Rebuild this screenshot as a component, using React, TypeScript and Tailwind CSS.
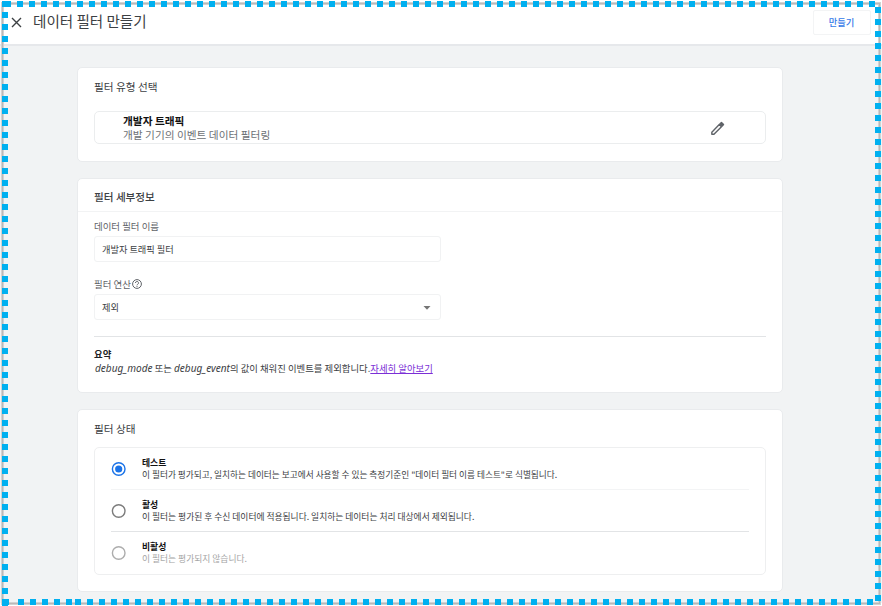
import React from "react";

const KR = "font-['Noto_Sans_CJK_KR',sans-serif]";

function Card({ className, children }: { className: string; children: React.ReactNode }) {
  return (
    <section className={`w-[706px] shrink-0 rounded-[5px] border border-[#e9ebed] bg-white ${className}`}>{children}</section>
  );
}

function Radio({ checked, muted }: { checked?: boolean; muted?: boolean }) {
  return (
    <svg className="mt-[13px] size-4 shrink-0" viewBox="0 0 16 16" fill="none">
      <circle cx="7.7" cy="8" r="6.3" stroke={checked ? "#1a73e8" : muted ? "#adadad" : "#7c7c7c"} strokeWidth="1.4" />
      {checked && <circle cx="7.7" cy="8" r="3.6" fill="#1a73e8" />}
    </svg>
  );
}

type OptionProps = { title: string; text: string; size?: string; checked?: boolean; muted?: boolean; line?: string };

function Option({ title, text, size = "text-[8.75px]", checked, muted, line }: OptionProps) {
  return (
    <div className={`flex h-[42px] ${line ? `border-b ${line}` : ""}`}>
      <Radio checked={checked} muted={muted} />
      <div className="ml-[15px] pt-[9px] whitespace-nowrap">
        <div className="text-[8.8px] leading-[12px] font-bold text-[#111]">{title}</div>
        <div className={`${size} leading-[11px] ${muted ? "text-[#a5a5a5]" : "text-[#3c4043]"}`}>{text}</div>
      </div>
    </div>
  );
}

function DottedFrame() {
  return (
    <div className="pointer-events-none absolute inset-0">
      <div className="absolute top-[2px] right-[1px] bottom-[1px] left-[1px] border-[3px] border-[#d2d2d2]" />
      <div className="absolute top-[3px] right-[2px] bottom-[2px] left-[2px] border border-[#b9b9b9]" />
      <div className="absolute top-[1px] left-[2px] h-[6px] w-[9px] bg-[#00b0f0]" />
      <div className="absolute top-[1px] left-[17px] h-[6px] w-[858px] bg-[repeating-linear-gradient(90deg,#00b0f0_0_6px,transparent_6px_12px)]" />
      <div className="absolute top-[12px] left-[2px] h-[594px] w-[6px] bg-[repeating-linear-gradient(180deg,#00b0f0_0_6px,transparent_6px_12px)]" />
      <div className="absolute top-[7px] left-[875px] h-[594px] w-[6px] bg-[repeating-linear-gradient(180deg,#00b0f0_0_6px,transparent_6px_12px)]" />
      <div className="absolute top-[599px] left-[2px] h-[6px] w-[7px] bg-[#00b0f0]" />
      <div className="absolute top-[599px] left-[18px] h-[6px] w-[57px] bg-[repeating-linear-gradient(90deg,#00b0f0_0_6px,transparent_6px_12px)]" />
      <div className="absolute top-[599px] left-[75px] h-[6px] w-[798px] bg-[repeating-linear-gradient(90deg,#00b0f0_0_6px,transparent_6px_12px)]" />
    </div>
  );
}

export default function App() {
  return (
    <div className={`relative h-[606px] w-[882px] overflow-hidden bg-white text-[#3c4043] ${KR}`}>
      <div className="flex h-[603px] flex-col bg-[#f1f3f4]">
        <header className="flex h-[46px] shrink-0 items-start border-b-2 border-[#e6e8eb] bg-white pl-[11px]">
          <svg className="mt-[17px] size-[11px]" viewBox="0 0 11 11" stroke="#3c4043" strokeWidth="1.4">
            <path d="M1 1l9 9M10 1l-9 9" />
          </svg>
          <h1 className="mt-[11px] ml-[11px] text-[14.55px] leading-[20px] whitespace-nowrap">데이터 필터 만들기</h1>
          <button className="mt-[10px] mr-[11px] ml-auto h-[25px] w-[58px] rounded-[2px] border border-[#f3f4f5] pr-px text-[9.3px] leading-[21px] font-medium text-[#3579e8]">
            만들기
          </button>
        </header>
        <main className="flex flex-col items-start pt-[21px] pl-[77px]">
          <Card className="h-[95px] px-[16px]">
            <h2 className="mt-[11px] text-[10.65px] leading-[16px]">필터 유형 선택</h2>
            <div className="mt-[16px] flex h-[33px] items-center rounded-[5px] border border-[#ebedee] pr-[39px] pl-[28px]">
              <div className="text-[10.7px] leading-[14px] whitespace-nowrap">
                <div className="font-bold text-[#111]">개발자 트래픽</div>
                <div className="text-[#6c7075]">개발 기기의 이벤트 데이터 필터링</div>
              </div>
              <svg className="mt-px ml-auto size-[17px]" viewBox="0 0 24 24" fill="none" stroke="#5f6368" strokeWidth="2" strokeLinejoin="round">
                <path d="M4 17.2V20.2H7L17.6 9.6L14.5 6.5z" />
                <path d="M15.6 5.4L17.6 3.6L20.5 6.5L18.7 8.4z" fill="#5f6368" />
              </svg>
            </div>
          </Card>
          <Card className="mt-[16px] h-[215px]">
            <h2 className="h-[33px] border-b border-[#f2f3f4] pt-[10px] pl-[16px] text-[10.6px] leading-[16px] font-medium">필터 세부정보</h2>
            <div className="px-[16px]">
              <div className="mt-[7px] text-[9.45px] leading-[14px] text-[#5f6368]">데이터 필터 이름</div>
              <div className="mt-[3px] h-[26px] w-[347px] rounded-[3px] border border-[#f1f2f3] pl-[7px] text-[9.2px] leading-[24px]">개발자 트래픽 필터</div>
              <div className="mt-[15px] flex h-[14px] items-center text-[9.45px] leading-[14px] text-[#5f6368]">
                필터 연산
                <svg className="ml-px size-[10px]" viewBox="0 0 10 10" fill="none" stroke="#5f6368" strokeWidth="1">
                  <circle cx="5" cy="5" r="4.4" />
                  <path d="M3.5 4a1.5 1.5 0 1 1 2.3 1.2C5.2 5.6 5 5.8 5 6.3M5 7v.9" />
                </svg>
              </div>
              <div className="mt-[3px] flex h-[26px] w-[347px] items-center justify-between rounded-[3px] border border-[#f1f2f3] pr-[9px] pl-[7px] text-[9.2px] leading-[24px]">
                제외
                <svg className="mt-px h-[4px] w-[8px]" viewBox="0 0 8 4" fill="#757575">
                  <path d="M.5 0h7L4 3.8z" />
                </svg>
              </div>
              <div className="mt-[16px] border-t border-[#e2e4e6] pt-[10px] text-[9.4px] leading-[14px] whitespace-nowrap">
                <div className="font-bold text-[#202124]">요약</div>
                <div className="pl-px">
                  <i className="font-['Noto_Sans'] text-[10.05px]">debug_mode</i> 또는 <i className="font-['Noto_Sans'] text-[10.05px]">debug_event</i>의 값이 채워진 이벤트를 제외합니다.
                  <a className="text-[#7b2fd6] underline">자세히 알아보기</a>
                </div>
              </div>
            </div>
          </Card>
          <Card className="mt-[16px] h-[183px] px-[16px]">
            <h2 className="mt-[11px] text-[10.65px] leading-[16px]">필터 상태</h2>
            <div className="mt-[10px] h-[128px] rounded-[5px] border border-[#eeeff0] px-[16px]">
              <Option
                title="테스트"
                text={'이 필터가 평가되고, 일치하는 데이터는 보고에서 사용할 수 있는 측정기준인 "데이터 필터 이름 테스트"로 식별됩니다.'}
                size="text-[8.69px]"
                checked
                line="border-[#f3f4f5]"
              />
              <Option title="활성" text="이 필터는 평가된 후 수신 데이터에 적용됩니다. 일치하는 데이터는 처리 대상에서 제외됩니다." line="border-[#e2e4e6]" />
              <Option title="비활성" text="이 필터는 평가되지 않습니다." muted />
            </div>
          </Card>
        </main>
      </div>
      <DottedFrame />
    </div>
  );
}
